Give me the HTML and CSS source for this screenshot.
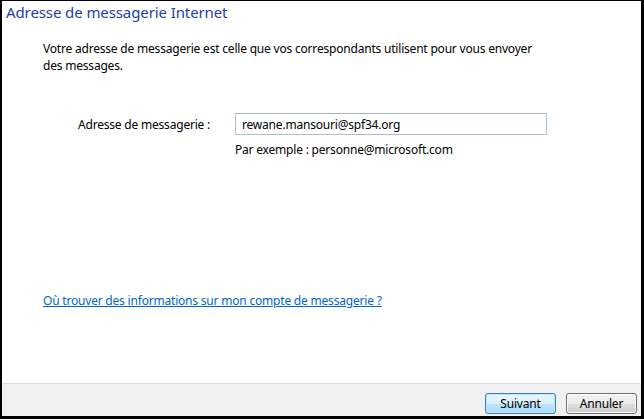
FILE: index.html
```html
<!DOCTYPE html>
<html lang="fr">
<head>
<meta charset="utf-8">
<title>Adresse de messagerie Internet</title>
<link rel="stylesheet" href="styles.css">
</head>
<body>
<div class="window">
  <main class="content">
    <h1 class="title">Adresse de messagerie Internet</h1>
    <p class="intro">Votre adresse de messagerie est celle que vos correspondants utilisent pour vous envoyer<br>des messages.</p>
    <div class="field">
      <label class="label" for="email">Adresse de messagerie :</label>
      <div class="field-body">
        <input class="input" id="email" type="text" value="rewane.mansouri@spf34.org">
        <div class="hint">Par exemple : personne@microsoft.com</div>
      </div>
    </div>
    <div class="spacer"></div>
    <a class="link" href="#">Où trouver des informations sur mon compte de messagerie ?</a>
  </main>
  <footer class="footer">
    <button class="btn btn-default">Suivant</button>
    <button class="btn">Annuler</button>
  </footer>
</div>
</body>
</html>
```
FILE: styles.css
```css
html, body {
  margin: 0;
  padding: 0;
  background: #000;
}
body {
  font-family: "Noto Sans", "Open Sans", sans-serif;
  font-size: 12px;
  letter-spacing: -0.2px;
  color: #000;
}
.window {
  box-sizing: border-box;
  width: 644px;
  height: 419px;
  border-style: solid;
  border-color: #000;
  border-width: 1px 3px 3px 2px;
  background: #fff;
  display: flex;
  flex-direction: column;
}
.content {
  flex: 1;
  display: flex;
  flex-direction: column;
  padding: 0 0 0 4px;
  border-bottom: 1px solid #dcdcdc;
}
.title {
  margin: 0;
  font-weight: normal;
  font-size: 15px;
  letter-spacing: -0.1px;
  line-height: 22px;
  color: #1c3fa8;
}
.intro {
  margin: 17px 0 0 37px;
  line-height: 17px;
}
.field {
  display: flex;
  margin-top: 39px;
  margin-left: 72px;
}
.label {
  width: 157px;
  line-height: 21px;
  padding-top: 1px;
}
.field-body {
  display: flex;
  flex-direction: column;
}
.input {
  box-sizing: border-box;
  width: 312px;
  height: 22px;
  margin: 0;
  border: 1px solid #abc0d6;
  border-top-color: #a3b6cc;
  padding: 0 6px;
  font-family: inherit;
  font-size: 12px;
  letter-spacing: -0.2px;
  color: #000;
  outline: none;
  background: #fff;
}
.hint {
  margin-top: 6px;
  line-height: 17px;
}
.spacer {
  flex: 1;
}
.link {
  margin: 0 0 74px 37px;
  color: #0066cc;
  text-decoration: underline;
  line-height: 17px;
  align-self: flex-start;
}
.footer {
  height: 32px;
  background: #f0f0f0;
  display: flex;
  justify-content: flex-end;
  align-items: flex-start;
  gap: 10px;
  padding: 9px 4px 0 0;
  box-sizing: border-box;
}
.btn {
  box-sizing: border-box;
  width: 71px;
  height: 21px;
  margin: 0;
  padding: 0;
  font-family: inherit;
  font-size: 12px;
  letter-spacing: -0.2px;
  color: #000;
  border: 1px solid #707070;
  border-radius: 3px;
  background: linear-gradient(#f2f2f2 0%, #ebebeb 50%, #dddddd 51%, #cfcfcf 100%);
  box-shadow: inset 0 0 0 1px #fcfcfc;
}
.btn-default {
  border-color: #3c7fb1;
  background: linear-gradient(#eaf6fd 0%, #d9f0fc 50%, #bee6fd 51%, #a7d9f5 100%);
  box-shadow: inset 0 0 0 1px #c4e5f6;
}
```
